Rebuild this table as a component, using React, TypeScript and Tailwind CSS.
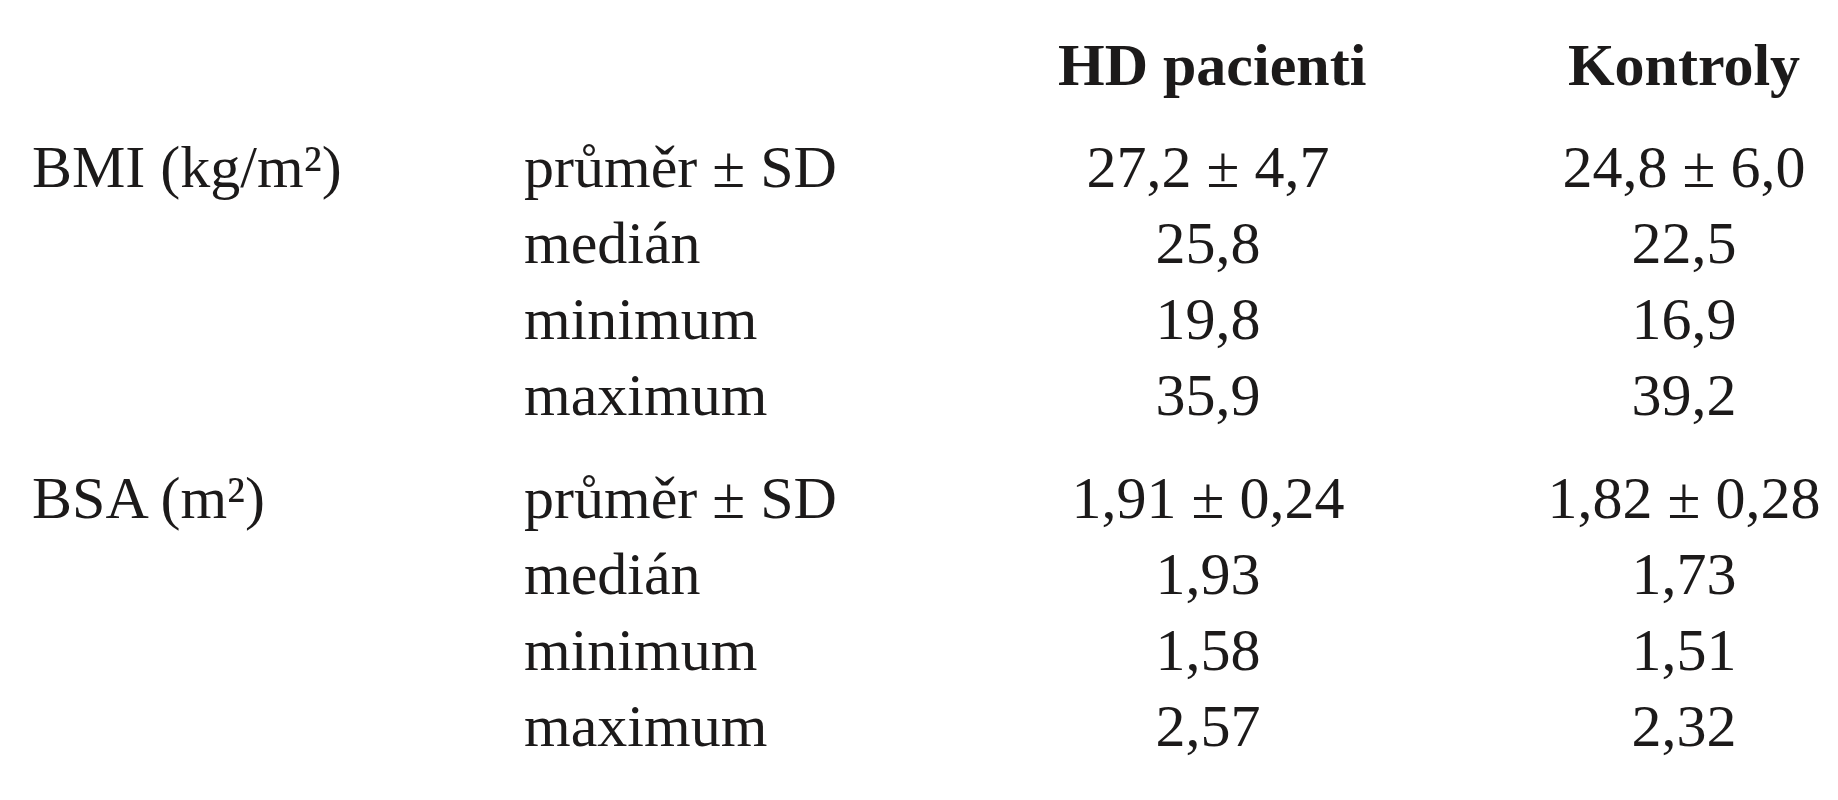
const rows = [
  {
    label: 'BMI (kg/m²)',
    items: [
      ['průměr ± SD', '27,2 ± 4,7', '24,8 ± 6,0'],
      ['medián', '25,8', '22,5'],
      ['minimum', '19,8', '16,9'],
      ['maximum', '35,9', '39,2'],
    ],
  },
  {
    label: 'BSA (m²)',
    items: [
      ['průměr ± SD', '1,91 ± 0,24', '1,82 ± 0,28'],
      ['medián', '1,93', '1,73'],
      ['minimum', '1,58', '1,51'],
      ['maximum', '2,57', '2,32'],
    ],
  },
];

export default function App() {
  return (
    <div
      className="w-[1838px] h-[800px] bg-white text-[#1c1a1a] pl-[32px] pt-[27px] text-[60px] leading-[76px] overflow-hidden whitespace-nowrap"
      style={{ fontFamily: '"Liberation Serif", "DejaVu Serif", serif' }}
    >
      <div className="flex font-bold">
        <div className="w-[492px]" />
        <div className="w-[534px]" />
        <div className="w-[300px] text-center">HD pacienti</div>
        <div className="w-[300px] ml-[176px] text-center">Kontroly</div>
      </div>

      <div className="flex flex-col gap-[27px] mt-[26px]">
        {rows.map((group) => (
          <div key={group.label} className="flex flex-col">
            {group.items.map(([stat, hd, ctrl], i) => (
              <div key={stat} className="flex">
                <div className="w-[492px]">{i === 0 ? group.label : ''}</div>
                <div className="w-[534px]">{stat}</div>
                <div className="w-[300px] text-center">{hd}</div>
                <div className="w-[300px] ml-[176px] text-center">{ctrl}</div>
              </div>
            ))}
          </div>
        ))}
      </div>
    </div>
  );
}
